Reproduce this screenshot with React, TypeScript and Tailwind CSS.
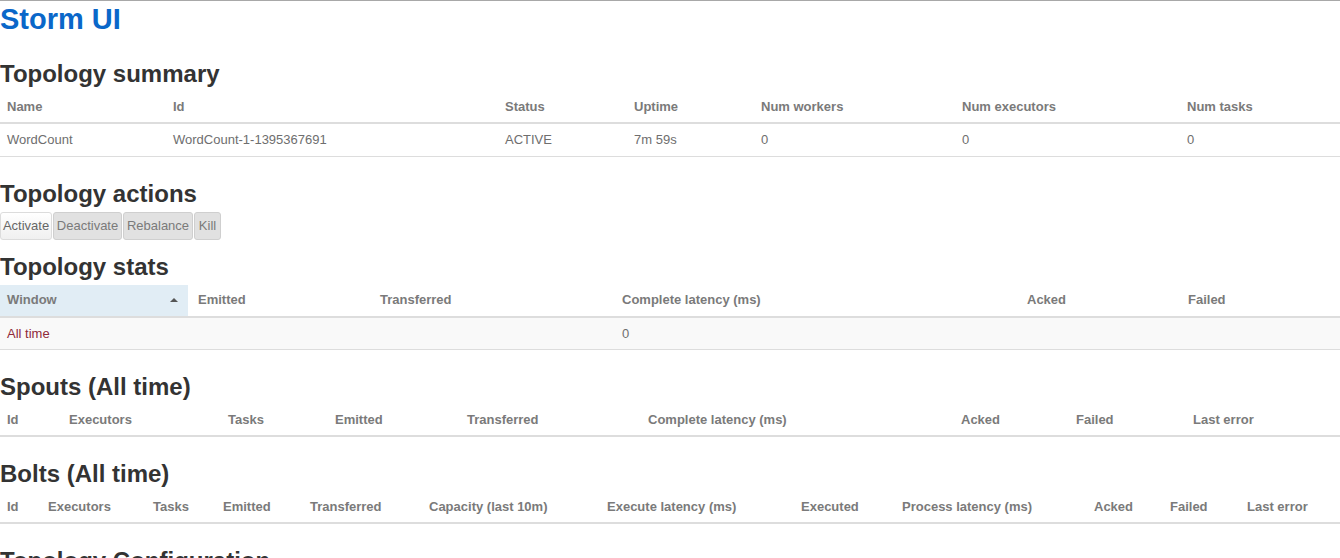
import React from 'react'

interface Col {
  label: string
  w?: string
}

const summaryCols: Col[] = [
  { label: 'Name', w: 'w-[166px]' },
  { label: 'Id', w: 'w-[332px]' },
  { label: 'Status', w: 'w-[129px]' },
  { label: 'Uptime', w: 'w-[127px]' },
  { label: 'Num workers', w: 'w-[201px]' },
  { label: 'Num executors', w: 'w-[225px]' },
  { label: 'Num tasks' },
]

const statsCols: Col[] = [
  { label: 'Emitted', w: 'w-[185px]' },
  { label: 'Transferred', w: 'w-[242px]' },
  { label: 'Complete latency (ms)', w: 'w-[405px]' },
  { label: 'Acked', w: 'w-[161px]' },
  { label: 'Failed' },
]

const spoutCols: Col[] = [
  { label: 'Id', w: 'w-[62px]' },
  { label: 'Executors', w: 'w-[159px]' },
  { label: 'Tasks', w: 'w-[107px]' },
  { label: 'Emitted', w: 'w-[132px]' },
  { label: 'Transferred', w: 'w-[181px]' },
  { label: 'Complete latency (ms)', w: 'w-[313px]' },
  { label: 'Acked', w: 'w-[115px]' },
  { label: 'Failed', w: 'w-[117px]' },
  { label: 'Last error' },
]

const boltCols: Col[] = [
  { label: 'Id', w: 'w-[41px]' },
  { label: 'Executors', w: 'w-[105px]' },
  { label: 'Tasks', w: 'w-[70px]' },
  { label: 'Emitted', w: 'w-[87px]' },
  { label: 'Transferred', w: 'w-[119px]' },
  { label: 'Capacity (last 10m)', w: 'w-[178px]' },
  { label: 'Execute latency (ms)', w: 'w-[194px]' },
  { label: 'Executed', w: 'w-[101px]' },
  { label: 'Process latency (ms)', w: 'w-[192px]' },
  { label: 'Acked', w: 'w-[76px]' },
  { label: 'Failed', w: 'w-[77px]' },
  { label: 'Last error' },
]

const th = 'h-[32px] px-[7px] text-left align-middle text-[13px] font-bold text-[#7a7a7a] border-b-2 border-[#dddddd] whitespace-nowrap'
const td = 'h-[33px] px-[7px] text-left align-middle text-[13px] text-[#6e6e6e] border-b border-[#dddddd] whitespace-nowrap'

function Heading({ children }: { children: React.ReactNode }) {
  return <h2 className="h-[33px] leading-[33px] text-[24px] font-bold text-[#333333] whitespace-nowrap">{children}</h2>
}

function HeadRow({ cols }: { cols: Col[] }) {
  return (
    <tr>
      {cols.map((c) => (
        <th key={c.label} className={`${th} ${c.w ?? ''}`}>{c.label}</th>
      ))}
    </tr>
  )
}

export default function App() {
  return (
    <div className="min-h-screen bg-white border-t border-[#a8a8a8] font-['Liberation_Sans',Arial,sans-serif] overflow-hidden">
      <h1 className="h-[37px] leading-[37px] text-[29px] font-bold text-[#0a67c9]">Storm UI</h1>

      <div className="mt-[19px]">
        <Heading>Topology summary</Heading>
        <table className="w-full table-fixed border-collapse mt-px">
          <thead>
            <HeadRow cols={summaryCols} />
          </thead>
          <tbody>
            <tr>
              <td className={td}>WordCount</td>
              <td className={td}>WordCount-1-1395367691</td>
              <td className={td}>ACTIVE</td>
              <td className={td}>7m 59s</td>
              <td className={td}>0</td>
              <td className={td}>0</td>
              <td className={td}>0</td>
            </tr>
          </tbody>
        </table>
      </div>

      <div className="mt-[20px]">
        <Heading>Topology actions</Heading>
        <div className="flex gap-px mt-[2px]">
          <button className="w-[52px] h-[28px] text-[13px] text-[#666666] bg-gradient-to-b from-white to-[#f0f0f0] border border-[#dcdcdc] rounded-[3px]">Activate</button>
          <button className="w-[69px] h-[28px] text-[13px] text-[#7a7a7a] bg-[#e1e1e1] border border-[#cfcfcf] rounded-[3px]">Deactivate</button>
          <button className="w-[70px] h-[28px] text-[13px] text-[#7a7a7a] bg-[#e1e1e1] border border-[#cfcfcf] rounded-[3px]">Rebalance</button>
          <button className="w-[27px] h-[28px] text-[13px] text-[#7a7a7a] bg-[#e1e1e1] border border-[#cfcfcf] rounded-[3px]">Kill</button>
        </div>
      </div>

      <div className="mt-[10px]">
        <Heading>Topology stats</Heading>
        <table className="w-full table-fixed border-collapse mt-[2px]">
          <thead>
            <tr>
              <th className={`${th} w-[188px] bg-[#e1edf5]`}>
                <div className="flex items-center justify-between">
                  <span>Window</span>
                  <span className="mr-[3px] w-0 h-0 border-l-[4px] border-r-[4px] border-b-[4px] border-l-transparent border-r-transparent border-b-[#555555]" />
                </div>
              </th>
              {statsCols.map((c, i) => (
                <th key={c.label} className={`${th} ${c.w ?? ''} ${i === 0 ? 'pl-[10px]' : ''}`}>{c.label}</th>
              ))}
            </tr>
          </thead>
          <tbody>
            <tr className="bg-[#f9f9f9]">
              <td className={`${td} text-[#8f2a3a]`}>All time</td>
              <td className={td}></td>
              <td className={td}></td>
              <td className={td}>0</td>
              <td className={td}></td>
              <td className={td}></td>
            </tr>
          </tbody>
        </table>
      </div>

      <div className="mt-[20px]">
        <Heading>Spouts (All time)</Heading>
        <table className="w-full table-fixed border-collapse mt-px">
          <thead>
            <HeadRow cols={spoutCols} />
          </thead>
        </table>
      </div>

      <div className="mt-[20px]">
        <Heading>Bolts (All time)</Heading>
        <table className="w-full table-fixed border-collapse mt-px">
          <thead>
            <HeadRow cols={boltCols} />
          </thead>
        </table>
      </div>

      <div className="mt-[20px]">
        <Heading>Topology Configuration</Heading>
      </div>
    </div>
  )
}
